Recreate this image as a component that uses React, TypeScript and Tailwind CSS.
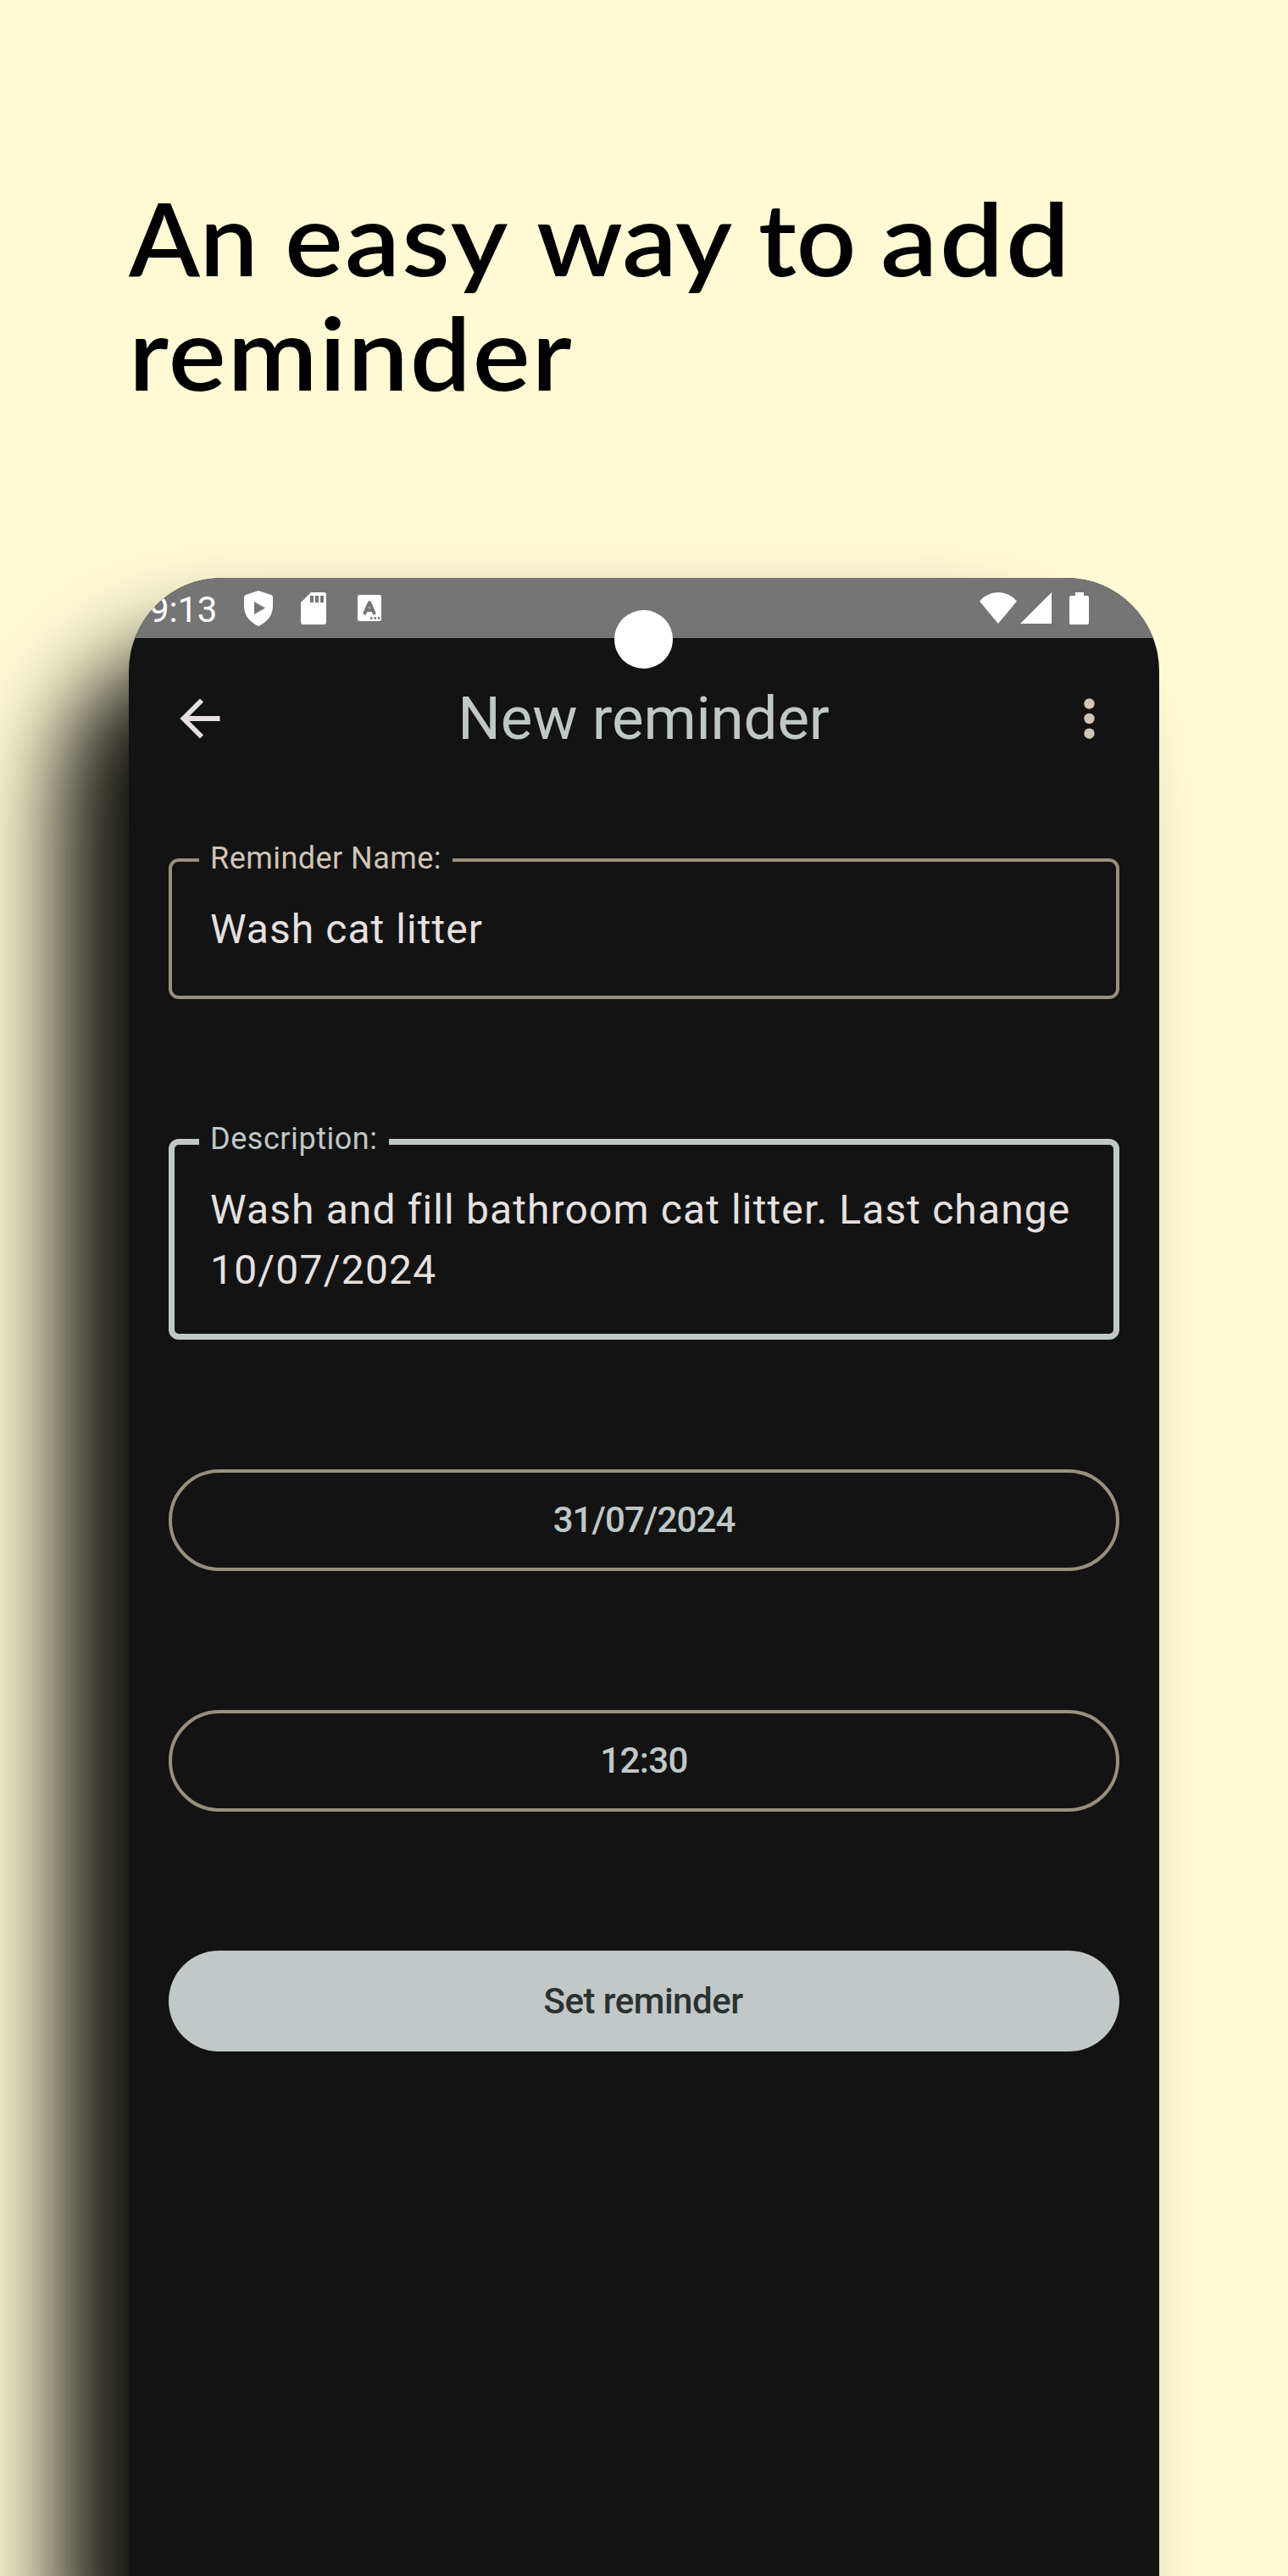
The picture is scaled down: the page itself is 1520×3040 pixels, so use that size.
import React from "react";

function Headline() {
  return (
    <h2 className="ml-[152px] mt-[213px] h-[469px] shrink-0 whitespace-nowrap font-[Lato,sans-serif] text-[120px] font-semibold leading-[135px] text-black">
      <span className="flex">
        <span className="w-[184px] origin-left scale-x-[1.02]">An </span>
        <span className="w-[297px] origin-left scale-x-[1.08] tracking-[2px]">easy </span>
        <span className="w-[262px] origin-left scale-x-[1.07]">way </span>
        <span className="w-[144px] origin-left scale-x-[1.03]">to </span>
        <span className="w-[230px] origin-left scale-x-[1.12] tracking-[2px]">add</span>
      </span>
      <span className="block w-[520px] origin-left scale-x-[1.065] tracking-[1.800px]">reminder</span>
    </h2>
  );
}

function StatusBar() {
  return (
    <div className="relative h-[71px] shrink-0 bg-[#757575] text-white">
      <div className="flex h-full items-center pl-[24px]">
        <span className="mt-[5px] w-[84px] whitespace-nowrap text-[42px] leading-none tracking-[-0.200px]">9:13</span>
        <svg className="ml-[28px]" width="34" height="42" viewBox="0 0 34 42" fill="currentColor">
          <path fillRule="evenodd" d="M17 0 L32 5 Q34 6 34 8 V18 C34 30 27 37 17 42 C7 37 0 30 0 18 V8 Q0 6 2 5Z M12 13 V28 L25 20.500Z" />
        </svg>
        <svg className="ml-[33px]" width="30" height="38" viewBox="0 0 30 38" fill="currentColor">
          <path fillRule="evenodd" d="M12 0 H27 Q30 0 30 3 V35 Q30 38 27 38 H3 Q0 38 0 35 V12Z M11 4 V12 H15 V4Z M17 4 V12 H21 V4Z M23 4 V12 H27 V4Z" />
        </svg>
        <svg className="ml-[37px]" width="28" height="31" viewBox="0 0 28 31" fill="currentColor">
          <rect width="28" height="31" rx="2" />
          <path d="M8.500 21.500 L14 9 L19.500 21.500 M10.500 18 H17.500" stroke="#757575" strokeWidth="4" fill="none" strokeLinecap="round" strokeLinejoin="round" />
          <path d="M15 27.500h2.500M19.500 27.500h2.500M24 27.500h2.500" stroke="#757575" strokeWidth="2.500" />
        </svg>
        <svg className="ml-auto" width="44" height="37" viewBox="0 0 44 37" fill="currentColor">
          <path d="M0 10.500 Q9 0 22 0 T44 10.500 L22 37Z" />
        </svg>
        <svg className="ml-[4px]" width="37" height="37" viewBox="0 0 37 37" fill="currentColor">
          <path d="M37 0V37H0Z" />
        </svg>
        <svg className="ml-[21px] mr-[83px]" width="23" height="38" viewBox="0 0 23 38" fill="currentColor">
          <path d="M7 0H17V4H21Q23 4 23 6V36Q23 38 21 38H2Q0 38 0 36V6Q0 4 2 4H7Z" />
        </svg>
      </div>
      <div className="absolute left-[573px] top-[38px] size-[69px] rounded-full bg-white" />
    </div>
  );
}

function TopBar() {
  return (
    <header className="flex h-[190px] shrink-0 items-center justify-between pl-[60px] pr-[76px]">
      <svg width="48" height="48" viewBox="0 0 48 48" fill="none" stroke="#e6e1e0" strokeWidth="5.800">
        <path d="M47.500 24H5M26 2.500L4.500 24L26 45.500" />
      </svg>
      <h1 className="mb-[2px] mr-[20px] text-[71px] leading-none tracking-[-0.200px] text-[#c0c8c7]">New reminder</h1>
      <svg width="13" height="48" viewBox="0 0 13 48" fill="#d0c5b6">
        <circle cx="6.500" cy="6.500" r="6.200" />
        <circle cx="6.500" cy="24" r="6.200" />
        <circle cx="6.500" cy="41.700" r="6.200" />
      </svg>
    </header>
  );
}

export default function App() {
  return (
    <main className="flex h-[3040px] w-[1520px] flex-col overflow-hidden bg-[#fdfad4] font-[Roboto,sans-serif]">
      <Headline />
      <section className="ml-[152px] h-[2500px] w-[1216px] shrink-0 rounded-[170px] shadow-[-82px_82px_106px_0px_rgba(0,0,0,0.93)]">
        <div className="flex h-full flex-col overflow-hidden rounded-[110px] bg-[#131313]">
          <StatusBar />
          <TopBar />
          <div className="flex flex-col px-[47px]">
            <div className="relative mt-[70px] h-[166px] rounded-[12px] border-[4px] border-[#998f80]">
              <span className="absolute left-[32px] top-[-25px] bg-[#131313] px-[13px] text-[36px] leading-[42px] tracking-[0.450px] text-[#d0c5b6]">Reminder Name:</span>
              <p className="ml-[45px] mt-[50px] text-[48px] leading-[60px] tracking-[1.050px] text-[#e6e1e0]">Wash cat litter</p>
            </div>
            <div className="relative mt-[165px] h-[237px] rounded-[12px] border-[7px] border-[#c0c8c7]">
              <span className="absolute left-[29px] top-[-28px] bg-[#131313] px-[13px] text-[36px] leading-[42px] tracking-[0.550px] text-[#c0c8c7]">Description:</span>
              <p className="ml-[42px] mt-[41px] whitespace-nowrap text-[48px] leading-[71px] tracking-[1.120px] text-[#e6e1e0]">
                Wash and fill bathroom cat litter. Last change
                <br />
                <span className="tracking-[1.200px]">10/07/2024</span>
              </p>
            </div>
            <button className="mt-[153px] h-[120px] rounded-full border-[4px] border-[#998f80] pb-[2px] text-[42px] font-medium tracking-[-0.900px] text-[#c0c8c7]">31/07/2024</button>
            <button className="mt-[164px] h-[120px] rounded-full border-[4px] border-[#998f80] pb-[2px] text-[42px] font-medium tracking-[-0.600px] text-[#c0c8c7]">12:30</button>
            <button className="mt-[164px] h-[119px] rounded-full bg-[#c2c8c7] pr-[2px] text-[42px] font-medium tracking-[-0.500px] text-[#2a3231]">Set reminder</button>
          </div>
        </div>
      </section>
    </main>
  );
}
